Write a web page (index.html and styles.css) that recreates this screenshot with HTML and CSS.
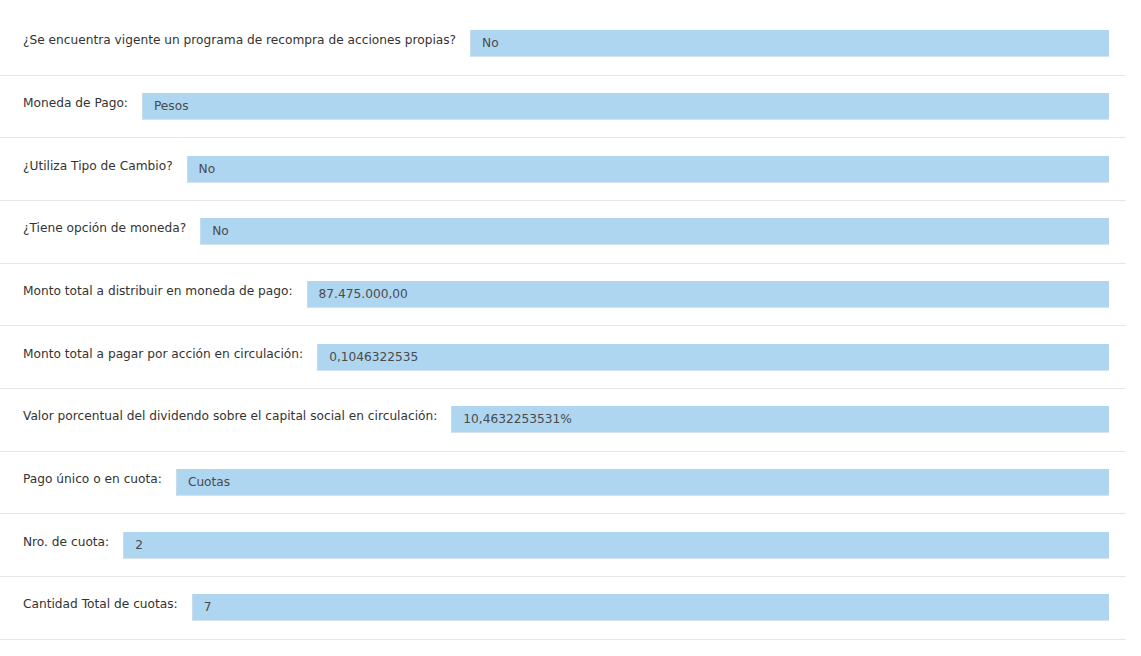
FILE: index.html
```html
<!DOCTYPE html>
<html lang="es">
<head>
<meta charset="UTF-8">
<title>Dividendos</title>
<link rel="stylesheet" href="styles.css">
</head>
<body>

<div class="formulario">
  <div class="fila">
    <div class="etiqueta">¿Se encuentra vigente un programa de recompra de acciones propias?</div>
    <div class="valor">No</div>
  </div>
  <div class="fila">
    <div class="etiqueta">Moneda de Pago:</div>
    <div class="valor">Pesos</div>
  </div>
  <div class="fila">
    <div class="etiqueta">¿Utiliza Tipo de Cambio?</div>
    <div class="valor">No</div>
  </div>
  <div class="fila">
    <div class="etiqueta">¿Tiene opción de moneda?</div>
    <div class="valor">No</div>
  </div>
  <div class="fila">
    <div class="etiqueta">Monto total a distribuir en moneda de pago:</div>
    <div class="valor">87.475.000,00</div>
  </div>
  <div class="fila">
    <div class="etiqueta">Monto total a pagar por acción en circulación:</div>
    <div class="valor">0,1046322535</div>
  </div>
  <div class="fila">
    <div class="etiqueta">Valor porcentual del dividendo sobre el capital social en circulación:</div>
    <div class="valor">10,4632253531%</div>
  </div>
  <div class="fila">
    <div class="etiqueta">Pago único o en cuota:</div>
    <div class="valor">Cuotas</div>
  </div>
  <div class="fila">
    <div class="etiqueta">Nro. de cuota:</div>
    <div class="valor">2</div>
  </div>
  <div class="fila">
    <div class="etiqueta">Cantidad Total de cuotas:</div>
    <div class="valor">7</div>
  </div>
</div>

</body>
</html>
```

FILE: styles.css
```css
* { margin: 0; padding: 0; box-sizing: border-box; }

body {
  font-family: "DejaVu Sans", Verdana, sans-serif;
  font-size: 12.2px;
  background: #fff;
  color: #333;
}

.formulario {
  width: 1126px;
  padding-top: 13px;
}

.fila {
  display: flex;
  align-items: flex-start;
  padding: 17.33px 17px 17.33px 23px;
  border-bottom: 1px solid #e6e6e6;
}

.etiqueta {
  line-height: 20px;
  color: #333;
  white-space: nowrap;
  margin-right: 15px;
}

.valor {
  flex: 1;
  height: 27px;
  line-height: 27px;
  padding-left: 11px;
  background: #aed6f1;
  color: #4a4a4a;
  border-bottom: 1px solid #d4e3ee;
  box-shadow: -1px 0 0 #c8dcea;
}
```
